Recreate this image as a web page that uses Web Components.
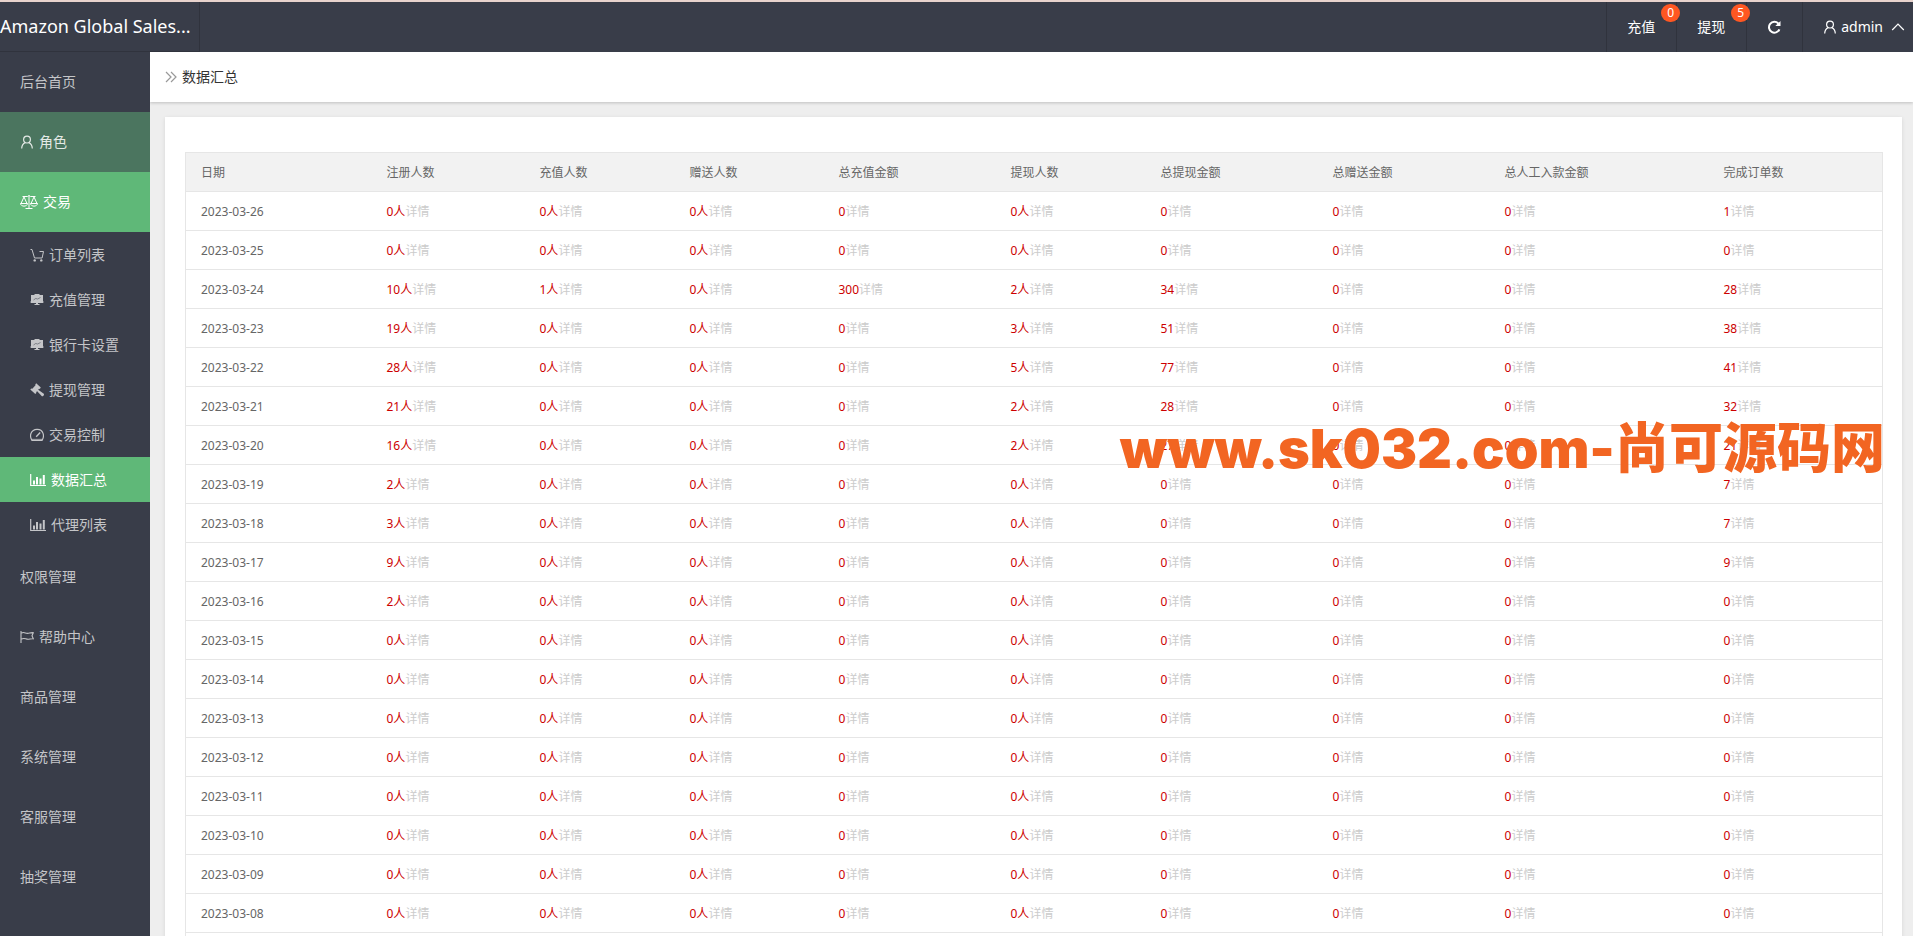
<!DOCTYPE html>
<html lang="zh-CN">
<head>
<meta charset="utf-8">
<title>数据汇总</title>
<style>
  html, body { height: 100%; }
  body { margin: 0; overflow: hidden; font: 14px/20px "Noto Sans", "Noto Sans CJK SC", sans-serif; color: #333; }
</style>
</head>
<body>
<admin-app></admin-app>
<script>
const ICONS = {
  user: [14, '<g fill="none" stroke="currentColor" stroke-width="1.2"><circle cx="7" cy="4.6" r="3.4"/><path d="M5.2 7.6C3 8.6 1.8 10.6 1.7 13.4M8.8 7.6c2.2 1 3.4 3 3.5 5.8"/></g>'],
  scale: [18, '<g fill="none" stroke="currentColor" stroke-width="1"><path d="M9 .5v12.500M5.500 13.500h7M2.500 1.500H7.500M10.500 1.500h5M7.500 1.500C8 .500 10 .500 10.500 1.500M4 2L1 8.500M4 2l3 6.500M14 2l-3 6.500M14 2l3 6.500"/><path d="M.5 8.500h7c-.3 3.500-6.700 3.500-7 0zM10.500 8.500h7c-.3 3.500-6.700 3.500-7 0z"/></g>'],
  cart: [14, '<g fill="none" stroke="currentColor" stroke-width="1"><path d="M.5 1.500h1.500l2.500 8.500h7.600L13.500 3.500H9.500"/></g><circle cx="4.700" cy="12.400" r="1.200" fill="currentColor"/><circle cx="11.300" cy="12.400" r="1.200" fill="currentColor"/>'],
  board: [14, '<path fill="currentColor" d="M4.500 1h5v1H13v8H8v1h1.500v1h-5v-1H6v-1H1V9.500H.300v-1H1V2h3.500zM13 8.500h.700v1H13z"/><path d="M3.500 7l2.200-1.500 2 .5 2.800-1.500" fill="none" stroke="#393d49" stroke-width=".5"/>'],
  gavel: [14, '<path fill="currentColor" d="M6.200.3l4.600 4.200-1 1.500-.8-.2-.8 1 5.600 4c.8.900-.9 3.100-1.900 2.400L7.200 8.200l-1 .8.100 1-1 .9L.3 6.500l1-1 1 .2L5.500 2.300l-.2-.9z"/>'],
  gauge: [14, '<path d="M2 12.300C-1 8 .8 1.500 7 1.300S15 8 12 12.300z" fill="none" stroke="currentColor" stroke-width="1.200"/><path d="M1.500 10.800h11v1.700h-11z" fill="currentColor" opacity=".6"/><path d="M6.200 8.800l4-4.200" stroke="currentColor" stroke-width="1.400"/>'],
  chart: [16, '<path d="M.7 1v11.500H16" fill="none" stroke="currentColor" stroke-width="1.200"/><path d="M3 7.500h2v4H3zM6 4h2v7.500H6zM9.500 5.500h2v6h-2zM12.800 2h2v9.500h-2z" fill="currentColor"/>'],
  flag: [14, '<path d="M1 1v12M1.500 3c3-1.600 4 .8 6.500.3 2-.3 3-.8 5.300-.6l-1.300 3 1.300 3.100c-2.500-.2-3.500.5-5.300.5-2.500 0-3.500-1.800-6.500-.3" fill="none" stroke="currentColor" stroke-width="1.100"/>'],
  refresh: [14, '<path d="M12.400 9.300A5.400 5.400 0 1 1 11.300 3.500" fill="none" stroke="currentColor" stroke-width="2"/><path d="M13.500.9v5.200H8.300z" fill="currentColor"/>'],
  up: [14, '<path d="M1.200 10L7 4.200 12.800 10" fill="none" stroke="currentColor" stroke-width="1.200"/>'],
  double: [14, '<path d="M2 2l5 5-5 5M7 2l5 5-5 5" fill="none" stroke="currentColor" stroke-width="1.2"/>']
};

/* Base class: clones a template string into an open shadow root. */
class Base extends HTMLElement {
  connectedCallback() {
    if (this.shadowRoot) return;
    const t = document.createElement('template');
    t.innerHTML = this.view();
    this.attachShadow({ mode: 'open' }).append(t.content.cloneNode(true));
  }
}

customElements.define('app-icon', class extends Base {
  view() {
    const [w, body] = ICONS[this.getAttribute('name')];
    return `<style>:host{display:block;flex:none}svg{display:block}</style>
      <svg width="${w}" height="14" viewBox="0 0 ${w} 14" aria-hidden="true">${body}</svg>`;
  }
});

customElements.define('header-item', class extends Base {
  view() {
    const badge = this.getAttribute('badge');
    return `<style>
      :host{display:block;position:relative;border-left:1px solid #30333d}
      a{display:flex;align-items:center;gap:4px;height:50px;padding:0 21px 0 20px;color:#fff;text-decoration:none}
      :host([menu]) a{gap:8px;padding:0 8px 0 20px}
      .badge{position:absolute;top:2px;right:-4px;min-width:19px;box-sizing:border-box;border-radius:10px;background:#ff5722;
        color:#fff;font-size:12px;line-height:18px;text-align:center;z-index:1}
    </style><a href="#" ${this.title ? `aria-label="${this.title}"` : ''}><slot></slot></a>${badge ? `<span class="badge">${badge}</span>` : ''}`;
  }
});

customElements.define('app-header', class extends Base {
  view() {
    return `<style>
      :host{display:flex;justify-content:space-between;background:#393d49;border-top:2px solid #e8d3cd;color:#fff}
      .logo{box-sizing:border-box;width:200px;height:50px;border:solid #30333d;border-width:0 1px 1px 0;font-size:18px;line-height:48px;
        white-space:nowrap;overflow:hidden}
      nav{display:flex}
      .user{display:flex;align-items:center;gap:4px}
    </style>
    <div class="logo">Amazon Global Sales...</div>
    <nav>
      <header-item badge="0">充值</header-item>
      <header-item badge="5">提现</header-item>
      <header-item title="刷新"><app-icon name="refresh"></app-icon></header-item>
      <header-item menu><span class="user"><app-icon name="user"></app-icon>admin</span><app-icon name="up"></app-icon></header-item>
    </nav>`;
  }
});

customElements.define('nav-item', class extends Base {
  view() {
    const icon = this.getAttribute('icon');
    return `<style>
      :host{display:block}
      a{display:flex;align-items:center;gap:5px;height:60px;padding-left:20px;color:#c4c5c8;text-decoration:none;white-space:nowrap}
      :host([sub]) a{height:45px;padding-left:30px}
      :host([hover]) a{background:#4b755f;color:#e4e9e6}
      :host([active]) a{background:#5fb878;color:#fff}
    </style><a href="#">${icon ? `<app-icon name="${icon}"></app-icon>` : ''}<slot></slot></a>`;
  }
});

customElements.define('side-nav', class extends Base {
  view() {
    return `<style>:host{display:block;width:150px;flex:none;background:#393d49;overflow:hidden}</style>
    <nav>
      <nav-item>后台首页</nav-item>
      <nav-item icon="user" hover>角色</nav-item>
      <nav-item icon="scale" active>交易</nav-item>
      <nav-item sub icon="cart">订单列表</nav-item>
      <nav-item sub icon="board">充值管理</nav-item>
      <nav-item sub icon="board">银行卡设置</nav-item>
      <nav-item sub icon="gavel">提现管理</nav-item>
      <nav-item sub icon="gauge">交易控制</nav-item>
      <nav-item sub icon="chart" active>数据汇总</nav-item>
      <nav-item sub icon="chart">代理列表</nav-item>
      <nav-item>权限管理</nav-item>
      <nav-item icon="flag">帮助中心</nav-item>
      <nav-item>商品管理</nav-item>
      <nav-item>系统管理</nav-item>
      <nav-item>客服管理</nav-item>
      <nav-item>抽奖管理</nav-item>
    </nav>`;
  }
});

customElements.define('page-title', class extends Base {
  view() {
    return `<style>
      :host{display:block;position:relative;background:#fff;box-shadow:0 1px 3px rgba(0,0,0,.2)}
      h1{display:flex;align-items:center;gap:4px;height:50px;margin:0;padding-left:14px;font-size:14px;font-weight:400}
      app-icon{color:#999}
    </style><h1><app-icon name="double"></app-icon><slot></slot></h1>`;
  }
});

customElements.define('summary-table', class extends Base {
  view() {
    const heads = ['日期','注册人数','充值人数','赠送人数','总充值金额','提现人数','总提现金额','总赠送金额','总人工入款金额','完成订单数'];
    const widths = [186,153,150,149,172,150,172,172,219,174];
    const people = [1, 2, 3, 5];
    /* Values per day that differ from zero, keyed by column. */
    const days = {
      26: {9:1}, 24: {1:10,2:1,4:300,5:2,6:34,9:28}, 23: {1:19,5:3,6:51,9:38}, 22: {1:28,5:5,6:77,9:41},
      21: {1:21,5:2,6:28,9:32}, 20: {1:16,5:2,6:27,9:21}, 19: {1:2,9:7}, 18: {1:3,9:7}, 17: {1:9,9:9}, 16: {1:2}
    };
    let rows = '';
    for (let d = 26; d >= 8; d--) {
      rows += `<tr><td>2023-03-${String(d).padStart(2, '0')}</td>`;
      for (let c = 1; c < 10; c++) {
        const v = (days[d] || {})[c] || 0;
        rows += `<td><b>${v}${people.includes(c) ? '人' : ''}</b><a href="#">详情</a></td>`;
      }
      rows += '</tr>';
    }
    return `<style>
      :host{display:block}
      table{width:100%;table-layout:fixed;border-collapse:collapse;border:1px solid #e6e6e6;color:#666;font-size:12px;line-height:20px}
      th,td{height:20px;padding:10px 15px 8px;border-bottom:1px solid #e6e6e6;text-align:left;font-weight:400;white-space:nowrap}
      th{background:#f2f2f2}
      b{font-weight:400;color:#c00}
      a{color:#ccc;text-decoration:none}
    </style>
    <table><colgroup>${widths.map(w => `<col style="width:${w}px">`).join('')}</colgroup>
    <thead><tr>${heads.map(h => `<th scope="col">${h}</th>`).join('')}</tr></thead><tbody>${rows}</tbody>
    <tfoot><tr><td colspan="10"></td></tr></tfoot></table>`;
  }
});

customElements.define('site-mark', class extends Base {
  view() {
    return `<style>
      :host{position:absolute;right:28px;top:417px;color:#f26522;
        font:900 54px/64px Inter,"Noto Sans CJK SC",sans-serif;white-space:nowrap;pointer-events:none}
    </style><slot></slot>`;
  }
});

customElements.define('admin-app', class extends Base {
  view() {
    return `<style>
      :host{display:flex;flex-direction:column;height:100vh;position:relative;overflow:hidden}
      .body{display:flex;flex:1;min-height:0}
      main{flex:1;min-width:0;background:#eee;overflow:hidden}
      .card{margin:15px 11px 15px 15px;padding:35px 20px;background:#fff;box-shadow:0 1px 4px rgba(0,0,0,.1)}
    </style>
    <app-header></app-header>
    <div class="body">
      <side-nav></side-nav>
      <main>
        <page-title>数据汇总</page-title>
        <section class="card"><summary-table></summary-table></section>
      </main>
    </div>
    <site-mark>www.sk032.com-尚可源码网</site-mark>`;
  }
});
</script>
</body>
</html>
